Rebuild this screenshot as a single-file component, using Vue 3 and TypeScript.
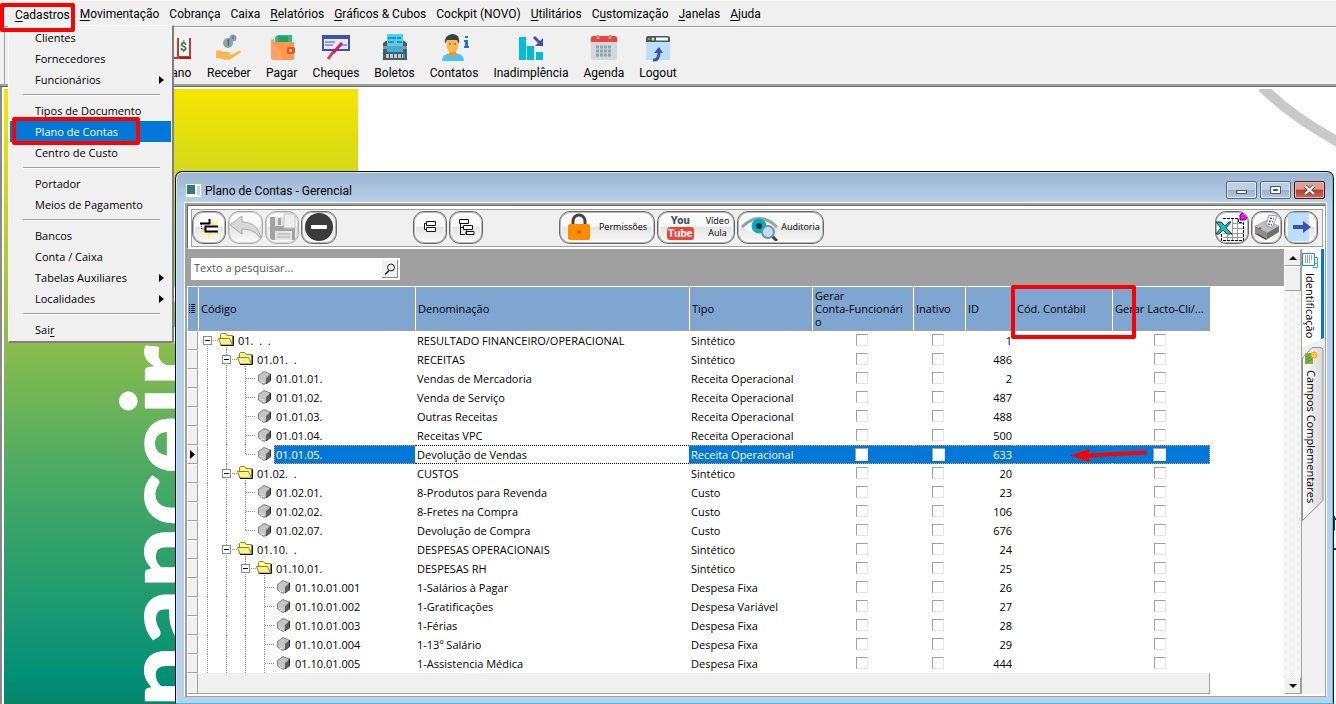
<script setup lang="ts">
import { ref } from 'vue'

interface MenuEntry { pre: string; key: string; post: string }
interface DropEntry { label: string; sub?: boolean; key?: string }
interface Account {
  code: string
  depth: number
  folder?: boolean
  last?: boolean
  name: string
  type: string
  id: number
}

const menus: MenuEntry[] = [
  { pre: '', key: 'C', post: 'adastros' },
  { pre: '', key: 'M', post: 'ovimentação' },
  { pre: 'Cobrança', key: '', post: '' },
  { pre: 'Caixa', key: '', post: '' },
  { pre: '', key: 'R', post: 'elatórios' },
  { pre: '', key: 'G', post: 'ráficos & Cubos' },
  { pre: 'Cockpit (NOVO)', key: '', post: '' },
  { pre: '', key: 'U', post: 'tilitários' },
  { pre: 'C', key: 'u', post: 'stomização' },
  { pre: '', key: 'J', post: 'anelas' },
  { pre: '', key: 'A', post: 'juda' },
]

const groups: DropEntry[][] = [
  [{ label: 'Clientes' }, { label: 'Fornecedores' }, { label: 'Funcionários', sub: true }],
  [{ label: 'Tipos de Documento' }, { label: 'Plano de Contas' }, { label: 'Centro de Custo' }],
  [{ label: 'Portador' }, { label: 'Meios de Pagamento' }],
  [{ label: 'Bancos' }, { label: 'Conta / Caixa' }, { label: 'Tabelas Auxiliares', sub: true }, { label: 'Localidades', sub: true }],
  [{ label: 'Sai', key: 'r' }],
]
const activeEntry = 'Plano de Contas'

const tools = ['Plano', 'Receber', 'Pagar', 'Cheques', 'Boletos', 'Contatos', 'Inadimplência', 'Agenda', 'Logout']

const columns = ['Código', 'Denominação', 'Tipo', 'Gerar\nConta-Funcionári\no', 'Inativo', 'ID', 'Cód. Contábil', 'Gerar Lacto-Cli/...']

const accounts: Account[] = [
  { code: '01.  .  .', depth: 0, folder: true, name: 'RESULTADO FINANCEIRO/OPERACIONAL', type: 'Sintético', id: 1 },
  { code: '01.01.  .', depth: 1, folder: true, name: 'RECEITAS', type: 'Sintético', id: 486 },
  { code: '01.01.01.', depth: 2, name: 'Vendas de Mercadoria', type: 'Receita Operacional', id: 2 },
  { code: '01.01.02.', depth: 2, name: 'Venda de Serviço', type: 'Receita Operacional', id: 487 },
  { code: '01.01.03.', depth: 2, name: 'Outras Receitas', type: 'Receita Operacional', id: 488 },
  { code: '01.01.04.', depth: 2, name: 'Receitas VPC', type: 'Receita Operacional', id: 500 },
  { code: '01.01.05.', depth: 2, last: true, name: 'Devolução de Vendas', type: 'Receita Operacional', id: 633 },
  { code: '01.02.  .', depth: 1, folder: true, name: 'CUSTOS', type: 'Sintético', id: 20 },
  { code: '01.02.01.', depth: 2, name: '8-Produtos para Revenda', type: 'Custo', id: 23 },
  { code: '01.02.02.', depth: 2, name: '8-Fretes na Compra', type: 'Custo', id: 106 },
  { code: '01.02.07.', depth: 2, last: true, name: 'Devolução de Compra', type: 'Custo', id: 676 },
  { code: '01.10.  .', depth: 1, folder: true, name: 'DESPESAS OPERACIONAIS', type: 'Sintético', id: 24 },
  { code: '01.10.01.', depth: 2, folder: true, name: 'DESPESAS RH', type: 'Sintético', id: 25 },
  { code: '01.10.01.001', depth: 3, name: '1-Salários à Pagar', type: 'Despesa Fixa', id: 26 },
  { code: '01.10.01.002', depth: 3, name: '1-Gratificações', type: 'Despesa Variável', id: 27 },
  { code: '01.10.01.003', depth: 3, name: '1-Férias', type: 'Despesa Fixa', id: 28 },
  { code: '01.10.01.004', depth: 3, name: '1-13º Salário', type: 'Despesa Fixa', id: 29 },
  { code: '01.10.01.005', depth: 3, name: '1-Assistencia Médica', type: 'Despesa Fixa', id: 444 },
]
const selectedId = ref(633)
const search = ref('')

const STEP = 19
const guideX = (level: number): number => 9 + STEP * level

function guides(a: Account): string {
  let d = ''
  for (let k = 0; k < a.depth; k++) d += `M${guideX(k)}.5 0V19`
  const x = guideX(a.depth)
  if (a.folder) {
    if (a.depth > 0) d += `M${x}.5 0V5`
    d += `M${x}.5 15V19M${x + 6} 9.5H${x + 11}M${x + STEP}.5 16V19`
  } else {
    d += a.last ? `M${x}.5 0V10` : `M${x}.5 0V19`
    d += `M${x + 1} 9.5H${x + 10}`
  }
  return d
}
</script>

<template>
  <div class="app">
    <nav class="menubar">
      <button v-for="(m, i) in menus" :key="i" type="button" :class="{ pressed: i === 0 }">{{ m.pre }}<u v-if="m.key">{{ m.key }}</u>{{ m.post }}</button>
    </nav>

    <div class="toolbar">
      <button v-for="t in tools" :key="t" type="button" class="tool">
        <svg width="32" height="28" viewBox="0 0 32 28" aria-hidden="true">
          <g v-if="t === 'Plano'">
            <path d="M5 4h26v21H5z" fill="#c33a3a" /><path d="M7 2h10v21H7zM19 3h10v19H19z" fill="#f4f4ee" /><path d="M5 25h14l2-2h10v2" fill="#922" />
            <text x="20" y="17" font-size="12" font-weight="700" fill="#2c7d4f">$</text>
          </g>
          <g v-else-if="t === 'Receber'">
            <circle cx="20" cy="4" r="3.500" fill="#8b9fb0" /><circle cx="15" cy="9" r="5" fill="#90a4ae" />
            <path d="M14 7l1.500-1v6" fill="none" stroke="#546e7a" stroke-width="1.500" /><path d="M20 2v3" stroke="#546e7a" />
            <path d="M3 17c3-2 6 0 8 1h5c2 0 2 3-1 3h3l7-4c3-1 4 1 2 2l-9 6c-4 2-7 0-15-1z" fill="#ffb74d" />
          </g>
          <g v-else-if="t === 'Pagar'">
            <path d="M4 5l3-4h20l3 5v18l-3 3H6l-2-4z" fill="#d5f1f4" />
            <path d="M9 3l3-2h14v9H9z" fill="#2ebd84" /><path d="M12 2h10v6H12z" fill="#249e6c" />
            <path d="M5 7c0-1 1-2 3-2v3h20v16c0 2-1 2-2 2H8c-2 0-3-1-3-3z" fill="#ff9750" /><path d="M5 8l11 9v9H8c-2 0-3-1-3-3z" fill="#ffac71" opacity=".5" />
            <rect x="21" y="13" width="8" height="7" rx="2" fill="#d95c31" /><circle cx="24.500" cy="16.500" r="1.500" fill="#ffc38b" />
          </g>
          <g v-else-if="t === 'Cheques'">
            <rect x="3" y="2" width="26" height="14" fill="#e8eaf6" stroke="#3f51b5" stroke-width="2" /><path d="M2 1h28v4H2z" fill="#3f51b5" />
            <path d="M5 8h10M5 11h8M19 11h8" stroke="#7986cb" stroke-width="1.500" />
            <path d="M22 9l-9 10" stroke="#d81b60" stroke-width="3" /><path d="M13 18l-5 7" stroke="#e53960" stroke-width="3" />
          </g>
          <g v-else-if="t === 'Boletos'">
            <path d="M4 9l3-2h18l3 2v17H4z" fill="#4c5a68" /><path d="M8 0h16v12H8z" fill="#4dd0f5" /><path d="M9 4h8M9 8h6M18 4h4M18 8h5" stroke="#1e7fa8" stroke-width="1.500" />
            <path d="M4 12h24v3H4z" fill="#8696a4" /><path d="M8 14h16v4H8z" fill="#33b5dc" /><path d="M7 22h17" stroke="#bdc8cf" stroke-width="4" stroke-dasharray="3 1" /><path d="M24 20h2v4h-2z" fill="#27ae60" />
          </g>
          <g v-else-if="t === 'Contatos'">
            <path d="M4 27c0-6 5-8 11-8s11 2 11 8z" fill="#4fc3f7" /><path d="M11 16h7v4c-1 3-6 3-7 0z" fill="#ff9800" />
            <path d="M9 6h11v7c0 7-11 7-11 0z" fill="#ffb74d" /><path d="M7 10c-1-7 3-9 7-10 6 0 8 4 7 10l-2-4H9z" fill="#37424a" /><path d="M11 10h2M16 10h2" stroke="#5d4037" />
            <path d="M27 2h3v2h-3zM26 6h4v6h1v2h-5v-2h1V8h-1z" fill="#1976d2" />
          </g>
          <g v-else-if="t === 'Inadimplência'">
            <path d="M4 3h7v23H4zM12 12h7v14h-7zM21 18h7v8h-7z" fill="#00bcd4" />
            <path d="M19 3l7 7" stroke="#3f51b5" stroke-width="3" /><path d="M28 4v8h-8z" fill="#3f51b5" />
          </g>
          <g v-else-if="t === 'Agenda'">
            <path d="M3 6h26v18q0 2-2 2H5q-2 0-2-2z" fill="#cfd8dc" /><path d="M3 8V4q0-2 2-2h22q2 0 2 2v4z" fill="#f44336" />
            <path d="M10 1v4M22 1v4" stroke="#90a4ae" stroke-width="3" /><path d="M8 13h16M8 17h16M8 21h16" stroke="#90a4ae" stroke-width="3" stroke-dasharray="3 1" />
          </g>
          <g v-else>
            <path d="M4 8h24v18H4z" fill="#bbdefb" /><path d="M4 8V4q0-2 2-2h20q2 0 2 2v4z" fill="#455a64" />
            <path d="M14 5h12" stroke="#fff" stroke-width="3" /><circle cx="7" cy="5" r="1" fill="#8bc34a" /><circle cx="11" cy="5" r="1.500" fill="#ffe03b" />
            <path d="M11 26q6 1 6-8" fill="none" stroke="#3f51b5" stroke-width="3" /><path d="M12 19l5-6 4 6z" fill="#3f51b5" />
          </g>
        </svg>
        <span>{{ t }}</span>
      </button>
    </div>

    <main class="workspace">
      <div class="banner"><span class="brand">nanceiro</span></div>
      <svg class="swoosh" width="80" height="64" viewBox="0 0 80 64" aria-hidden="true"><path d="M6-2Q36 28 84 54" fill="none" stroke="#c9c9c9" stroke-width="10" /></svg>
      <svg class="sliver" width="3" height="40" viewBox="0 0 3 40" aria-hidden="true"><path d="M1 3v14M0 6h3M0 36h3" fill="none" stroke="#123a52" stroke-width="2" /></svg>

      <section class="window" aria-label="Plano de Contas - Gerencial">
        <header class="titlebar">
          <svg width="15" height="13" viewBox="0 0 15 13" aria-hidden="true"><path d="M0 0h15v13H0z" fill="#fff" /><path d="M1 1h8v9H1z" fill="#2f7d6b" /><path d="M1 1h8v3H1z" fill="#3c6f8e" /><path d="M11 2h3v9h-3z" fill="#c9d6cf" /></svg>
          <h1>Plano de Contas - Gerencial</h1>
          <button type="button" class="sys" aria-label="Minimizar"><svg width="13" height="10" viewBox="0 0 13 10"><rect x="1.500" y="5.500" width="10" height="3" fill="#fff" stroke="#4a5766" /></svg></button>
          <button type="button" class="sys" aria-label="Restaurar"><svg width="13" height="10" viewBox="0 0 13 10"><path d="M1.500 1.500h10v7h-10zM4.500 4.500v1h4v-1z" fill="#fff" fill-rule="evenodd" stroke="#4a5766" /></svg></button>
          <button type="button" class="sys close" aria-label="Fechar"><svg width="13" height="10" viewBox="0 0 13 10"><path d="M2 1l9 8M11 1L2 9" stroke="#555" stroke-width="4" /><path d="M2 1l9 8M11 1L2 9" stroke="#fff" stroke-width="2" /></svg></button>
        </header>

        <div class="client">
          <div class="commands">
            <div class="bar">
              <button type="button" class="cmd w34" aria-label="Novo"><svg width="26" height="26" viewBox="0 0 26 26"><path d="M5 19l3-2M21 8l-2 3M12 18l1 4 2-4M20 18l2 3M17 11l-2-4" fill="none" stroke="#fff04a" stroke-width="2" /><path d="M5 6h8v3H5zM10 13h12v4H10z" fill="#fff" /><path d="M4 9.500h9.500V5M22 12.500H9.500v5H22" fill="none" stroke="#000" stroke-width="2" /><path d="M5.500 10v5H9" fill="none" stroke="#000" stroke-dasharray="1 1" /></svg></button>
              <button type="button" class="cmd w35 off" aria-label="Desfazer"><svg width="34" height="28" viewBox="0 0 34 28"><path d="M1 12L13 3v6c11 0 17 6 19 17-5-7-10-10-19-10v5z" fill="#d8d8d8" stroke="#a8a8a8" /></svg></button>
              <button type="button" class="cmd w34 off" aria-label="Salvar"><svg width="28" height="28" viewBox="0 0 28 28"><path d="M2 4h25v23H4l-2-2z" fill="#a3a3a3" /><path d="M7 4h10v9H7zM7 18h17v9H7z" fill="#e4e4e4" /><path d="M9 21h13M9 24h13" stroke="#aaa" /><path d="M10 5h3v7h-3z" fill="#a3a3a3" /><path d="M16 1h11v14H16z" fill="#eee" stroke="#c4c4c4" /></svg></button>
              <button type="button" class="cmd w36" aria-label="Excluir"><svg width="30" height="30" viewBox="0 0 30 30"><circle cx="15" cy="15" r="14" fill="#3b3b3b" /><rect x="7" y="13" width="16" height="4" rx="1" fill="#fff" /></svg></button>
              <button type="button" class="cmd w34 apart" aria-label="Expandir"><svg width="14" height="14" viewBox="0 0 14 14"><path d="M3.500 1.500h9v4h-9zM3.500 7.500h9v4h-9zM3 3.500H1.500v6H3" fill="#fff" stroke="#111" /></svg></button>
              <button type="button" class="cmd w34" aria-label="Hierarquia"><svg width="18" height="18" viewBox="0 0 18 18"><path d="M2.500 1.500h9v4h-9zM6.500 7.500h9v4h-9zM3.500 6v11M4 9.500h3M4 16.500h4M9.500 12v5M9 13.500h8v3H9z" fill="#fff" stroke="#111" /></svg></button>
              <button type="button" class="cmd w96 apart">
                <svg width="24" height="28" viewBox="0 0 24 28" aria-hidden="true"><path d="M6 12V8a6 6 0 0 1 12 0v4" fill="none" stroke="#424242" stroke-width="3" /><rect x="1" y="11" width="22" height="16" rx="2" fill="#fb8c00" /><circle cx="12" cy="19" r="2" fill="#c76a00" /></svg>
                <span>Permissões</span>
              </button>
              <button type="button" class="cmd w78">
                <span class="yt" aria-hidden="true"><b>You</b><i>Tube</i></span>
                <span>Vídeo<br>Aula</span>
              </button>
              <button type="button" class="cmd w87">
                <svg width="38" height="28" viewBox="0 0 38 28" aria-hidden="true"><path d="M2 14Q18-2 35 14Q18 27 2 14" fill="#fff" /><path d="M1 14Q18-3 36 14" fill="none" stroke="#90a4ae" stroke-width="3" /><circle cx="18" cy="13" r="7.500" fill="#00acc1" /><circle cx="18" cy="13" r="3" fill="#17343c" /><path d="M31 23l5 5" stroke="#37474f" stroke-width="3" /><circle cx="27" cy="19" r="6" fill="#bbdefb" stroke="#78909c" stroke-width="2" /></svg>
                <span>Auditoria</span>
              </button>
              <button type="button" class="cmd w34 end" aria-label="Exportar para Excel"><svg width="34" height="32" viewBox="0 0 34 32"><path d="M8 7h15l6 6v16H7V16" fill="#fff" /><path d="M8 7.500h15.500v4h5v18H6.500v-7" fill="none" stroke="#000" stroke-dasharray="3 1" /><path d="M17 12.500h11M17 17.500h11M8 22.500h20M8 26.500h20M12.500 24v5M17.500 8v21M22.500 8v21" stroke="#9a9a9a" /><path d="M1 11h5l4 4 4-4h2l-5 6 6 6h-5l-4-4-4 4H1l5-6z" fill="#17c3c3" stroke="#053b3b" /><path d="M25 4l2-2h5v5l-2 2h-5z" fill="#f0f" stroke="#600060" /></svg></button>
              <button type="button" class="cmd w31" aria-label="Imprimir"><svg width="28" height="28" viewBox="0 0 28 28"><path d="M2 13l12-6 12 6v6l-13 8-11-6z" fill="#6e6e6e" /><path d="M2 13l12-6 12 6-12 7z" fill="#bdbdbd" /><path d="M2 14l12 6v6L2 20z" fill="#8e8e8e" /><path d="M13 12l3-10 8 1-5 12z" fill="#fff" stroke="#99a" /><path d="M17 5l4 1M16 8l4 1M15 11l4 1" stroke="#4455e0" stroke-width="1.500" stroke-dasharray="2 1" /><path d="M6 15l2 1" stroke="#e33" stroke-width="2" /><path d="M4 21l9 5" stroke="#333" /></svg></button>
              <button type="button" class="cmd w34" aria-label="Sair"><svg width="28" height="28" viewBox="0 0 28 28"><path d="M1 0h21v28H1z" fill="#bbdefb" /><path d="M6 14h12" stroke="#3f51b5" stroke-width="4" /><path d="M16 8l8 6-8 6z" fill="#3f51b5" /></svg></button>
            </div>
          </div>

          <div class="content">
            <div class="grid-side">
              <div class="searchrow">
                <form class="search" @submit.prevent>
                  <input v-model="search" type="text" aria-label="Texto a pesquisar" placeholder="Texto a pesquisar...">
                  <button type="submit" aria-label="Pesquisar"><svg width="12" height="12" viewBox="0 0 12 12"><circle cx="7" cy="4.500" r="3.500" fill="none" stroke="#222" /><path d="M5 7.500L1 11.500" stroke="#222" stroke-width="1.500" /></svg></button>
                </form>
              </div>
              <table>
                <colgroup><col class="c0"><col class="c1"><col class="c2"><col class="c3"><col class="c4"><col class="c5"><col class="c6"><col class="c7"><col class="c7"></colgroup>
                <thead>
                  <tr>
                    <th class="mark"><svg width="8" height="10" viewBox="0 0 8 10" aria-hidden="true"><path d="M1 .5h1M1 2.500h1M1 4.500h1M1 6.500h1M1 8.500h1M3 .5h4M3 2.500h4M3 4.500h4M3 6.500h4M3 8.500h4" stroke="#111" /></svg></th>
                    <th v-for="c in columns" :key="c" scope="col">{{ c }}</th>
                  </tr>
                </thead>
                <tbody>
                  <tr v-for="a in accounts" :key="a.id" :class="{ selected: a.id === selectedId }" @click="selectedId = a.id">
                    <td class="rowhead"><svg v-if="a.id === selectedId" width="5" height="9" viewBox="0 0 5 9" aria-hidden="true"><path d="M0 0l5 4.500L0 9z" /></svg></td>
                    <td class="code">
                      <div class="node">
                        <svg :width="38 + STEP * a.depth" height="19" aria-hidden="true">
                          <path :d="guides(a)" class="guide" />
                          <g v-if="a.folder" :transform="`translate(${STEP * a.depth} 0)`">
                            <rect x="5.500" y="5.500" width="8" height="8" fill="#fff" stroke="#8a8a8a" /><path d="M7 9.500h5" stroke="#000" />
                            <path d="M22.500 13.500v-10l1-1h4l1.500 2h5.500v9z" fill="#ffffa8" stroke="#8c8c00" /><path d="M20.500 7.500h11l3 6.500H23z" fill="#ffef9a" stroke="#8c8c00" /><path d="M23 14.500h12.500V5" fill="none" stroke="#111" />
                          </g>
                          <g v-else :transform="`translate(${STEP * a.depth} 0)`">
                            <path d="M22.500 6.500L28 2.500l6 2.500v6l-6 4.500-5.500-3.500z" fill="#c4c4c4" stroke="#808080" /><path d="M34 5.500V11l-4 4V9z" fill="#606060" /><path d="M34.500 5v6.500L30 15" fill="none" stroke="#222" /><path d="M24 11.500h4M25 13.500h4" stroke="#fff" stroke-dasharray="1 1" />
                          </g>
                        </svg>
                        <span>{{ a.code }}</span>
                      </div>
                    </td>
                    <td class="name">{{ a.name }}</td>
                    <td>{{ a.type }}</td>
                    <td class="check"><input type="checkbox" :aria-label="`Gerar Conta-Funcionário ${a.code}`"></td>
                    <td class="check"><input type="checkbox" :aria-label="`Inativo ${a.code}`"></td>
                    <td class="num">{{ a.id }}</td>
                    <td></td>
                    <td class="check final"><input type="checkbox" :aria-label="`Gerar Lacto ${a.code}`"></td>
                  </tr>
                </tbody>
                <tfoot><tr><td class="rowhead"></td><td colspan="8"></td></tr></tfoot>
              </table>
            </div>

            <div class="scroll">
              <button type="button" aria-label="Rolar para cima"><svg width="8" height="4" viewBox="0 0 8 4"><path d="M0 4l4-4 4 4z" /></svg></button>
              <div class="thumb"></div>
              <div class="track"></div>
              <button type="button" aria-label="Rolar para baixo"><svg width="8" height="4" viewBox="0 0 8 4"><path d="M0 0h8L4 4z" /></svg></button>
            </div>

            <div class="tabs" role="tablist">
              <button type="button" role="tab" aria-selected="true" class="tab first">
                <svg width="17" height="17" viewBox="0 0 17 17" aria-hidden="true"><path d="M11.500 5.500h5v10h-5M13 11.500h3" fill="#e3f1fd" stroke="#42a5f5" /><path d="M1.500 1.500h12v12h-12z" fill="#fff" stroke="#1e88e5" /><path d="M4.500 3v8M6.500 3v8M8.500 3v8M10.500 3v5" stroke="#90a9d8" /></svg>
                <span>Identificação</span>
              </button>
              <button type="button" role="tab" aria-selected="false" class="tab second">
                <svg class="shape" width="22" height="174" viewBox="0 0 22 174" preserveAspectRatio="none" aria-hidden="true">
                  <defs><linearGradient id="tabFill" x1="0" x2="1" y1="0" y2="0"><stop offset="0" stop-color="#fff" /><stop offset="1" stop-color="#d8d8d8" /></linearGradient></defs>
                  <path d="M.5 11L10 .5h8q3 0 3 3v150L.5 173.500z" fill="url(#tabFill)" stroke="#8f8f8f" />
                </svg>
                <svg width="14" height="14" viewBox="0 0 14 14" aria-hidden="true"><path d="M1 2h8v11H1z" fill="#7cb342" /><path d="M2 6l5-3M2 9l6-4M2 12l6-4" stroke="#558b2f" /><circle cx="10" cy="4" r="3" fill="#ffc93c" stroke="#f9a01b" /></svg>
                <span>Campos Complementares</span>
              </button>
            </div>
          </div>
        </div>
      </section>
    </main>

    <div class="dropdown" role="menu">
      <div v-for="(g, gi) in groups" :key="gi" class="group">
        <button v-for="e in g" :key="e.label" type="button" role="menuitem" :class="{ active: e.label === activeEntry }">
          <span>{{ e.label }}<u v-if="e.key">{{ e.key }}</u></span>
          <svg v-if="e.sub" width="5" height="8" viewBox="0 0 5 8" aria-hidden="true"><path d="M0 0l5 4-5 4z" /></svg>
        </button>
      </div>
    </div>

    <div class="callout on-menu"></div>
    <div class="callout on-entry"></div>
    <div class="callout on-column"></div>
    <svg class="arrow" width="80" height="16" viewBox="0 0 80 16" aria-hidden="true"><path d="M20 8.500L76 5.500" stroke="#f00" stroke-width="4" stroke-linecap="round" /><path d="M1 8.500L21 2l-2 6 2 7z" fill="#f00" /></svg>
  </div>
</template>

<style>
body { margin: 0; background: #fff; }
</style>

<style scoped>
.app { position: relative; display: flex; flex-direction: column; min-height: 100vh; overflow: hidden; background: #fff; color: #000; font: 11px/14px "Open Sans", "Noto Sans", sans-serif; }
* { box-sizing: border-box; }
button { margin: 0; padding: 0; border: 0; background: none; color: inherit; font: inherit; }
svg { display: block; flex: none; }
u { text-underline-offset: 2px; }

.menubar { display: flex; align-items: center; gap: 10px; height: 28px; padding-left: 15px; background: #f0f0f0; border-top: 1px solid #fafafa; border-bottom: 1px solid #fff; box-shadow: inset 0 -1px #a0a0a0; font: 12px/16px Roboto, sans-serif; white-space: nowrap; }
.menubar .pressed { padding-top: 2px; }
.toolbar { display: flex; align-items: flex-start; gap: 15px; height: 59px; padding: 6px 0 0 160px; background: #f0f0f0; border-bottom: 1px solid #696969; box-shadow: inset 0 -2px #a0a0a0, inset 4px 0 #f0f0f0, inset 5px 0 #a0a0a0; font: 12px/16px Roboto, sans-serif; }
.tool { display: flex; flex-direction: column; align-items: center; gap: 3px; }

.workspace { position: relative; flex: 1; overflow: hidden; padding: 2px 0 0 2px; border-left: 2px solid #8a8a8a; display: flex; }
.banner { position: relative; width: 354px; overflow: hidden; background: linear-gradient(#f6e500 0%, #d2d91a 14%, #8bbd4c 41%, #4caa64 62%, #1d9a70 84%, #008f75 96%, #078569 100%); }
.brand { position: absolute; top: 194px; left: 89px; writing-mode: vertical-rl; rotate: 180deg; color: #fff; font: 900 110px/132px Lato, sans-serif; }
.swoosh { position: absolute; top: 2px; right: 0; }
.sliver { position: absolute; top: 426px; right: 0; }

.window { position: absolute; top: 84px; left: 173px; right: 2px; bottom: 0; display: flex; flex-direction: column; padding: 1px 6px 6px 8px; border: 1px solid #111; border-bottom: 1px solid #35c3e8; border-radius: 7px 7px 0 0; background: linear-gradient(#9ab4d2, #b9d1ea 31px); box-shadow: inset 1px 1px #d5e4f4, inset -1px 0 #3fc6ea; }
.titlebar { display: flex; align-items: center; gap: 3px; height: 29px; padding: 6px 2px 0 2px; }
.titlebar h1 { flex: 1; margin: 0 0 0 1px; font: 12px/16px Roboto, sans-serif; }
.sys { display: grid; place-items: center; width: 31px; height: 18px; margin-bottom: 2px; border: 1px solid #54657a; border-radius: 2px; background: linear-gradient(#bccfe3 50%, #98b1cc 50%, #b3c9e0); box-shadow: inset 0 0 0 1px #dbe7f3; }
.close { border-color: #4a1512; background: linear-gradient(#dc9d92 45%, #b93d27 50%, #cf6b57); box-shadow: inset 0 0 0 1px #e6b5ac; }

.client { flex: 1; display: flex; flex-direction: column; min-height: 0; border: 1px solid #fff; border-bottom-color: #a0a0a0; box-shadow: inset 2px 2px #a0a0a0, inset -1px 0 #a0a0a0; background: #fff; padding: 2px 1px 2px 2px; }
.commands { padding: 3px 2px 1px 3px; border-top: 1px solid #696969; border-left: 1px solid #696969; border-bottom: 1px solid #fff; background: #fff; }
.bar { display: flex; align-items: center; gap: 2px; height: 38px; padding: 0 4px 2px 0; border: 1px solid #a0a0a0; background: #f0f0f0; }
.cmd { display: flex; align-items: center; justify-content: center; gap: 8px; height: 33px; overflow: hidden; border: 1px solid #6a6a6a; border-radius: 11px; background: linear-gradient(#fafafa 45%, #e4e4e4 50%, #fafafa); box-shadow: inset 0 0 0 1px #b4b4b4, inset 0 0 0 2px #fff; font: 9px/12px "Open Sans", sans-serif; }
.off { border-color: #a9a9a9; box-shadow: inset 0 0 0 1px #d4d4d4; }
.w31 { width: 31px; } .w34 { width: 34px; } .w35 { width: 35px; } .w36 { width: 36px; } .w78 { width: 78px; } .w87 { width: 87px; } .w96 { width: 96px; }
.apart { margin-left: 74px; }
.end { margin-left: auto; }
.w87 { gap: 2px; }
.yt { display: flex; flex-direction: column; align-items: center; margin: 0 4px; font: 700 11px/13px Roboto, sans-serif; }
.yt b { color: #455a64; }
.yt i { width: 27px; border-radius: 3px; background: #f44336; color: #fff; font-style: normal; text-align: center; }

.content { flex: 1; display: flex; min-height: 0; }
.grid-side { flex: 1; min-width: 0; overflow: hidden; background: #fff; }
.searchrow { height: 37px; padding: 9px 0 0 4px; background: #a0a0a0; }
.search { display: flex; width: 209px; height: 22px; padding: 1px; border: 1px solid #fff; background: #fff; }
.search input { flex: 1; min-width: 0; padding: 0 1px 2px; border: 0; outline: 0; font: inherit; }
.search input::placeholder { color: #555; opacity: 1; }
.search button { display: grid; place-items: center; width: 16px; background: #f0f0f0; border-right: 1px solid #888; border-bottom: 1px solid #888; }

table { width: 1023px; border-collapse: separate; border-spacing: 0; table-layout: fixed; }
.c0 { width: 11px; } .c1 { width: 217px; } .c2 { width: 274px; } .c3 { width: 123px; } .c4 { width: 101px; } .c5 { width: 52px; } .c6 { width: 49px; } .c7 { width: 98px; }
th { height: 45px; padding: 0 0 0 2px; border: 1px solid #fff; border-right-color: #a0a0a0; border-bottom-color: #a0a0a0; background: #7fa5d1; font-weight: 400; line-height: 13px; text-align: left; white-space: pre; overflow: hidden; }
th.mark { padding: 0; }
td { height: 19px; padding: 0 2px; line-height: 17px; white-space: nowrap; overflow: hidden; }
td.rowhead { padding: 0 0 0 2px; border: 1px solid #fff; border-right-color: #a0a0a0; border-bottom-color: #a0a0a0; background: #f0f0f0; }
td.code { padding: 0; }
.node { display: flex; height: 19px; white-space: pre; }
.node span { flex: 1; padding-left: 2px; line-height: 19px; }
.guide { fill: none; stroke: #909090; stroke-dasharray: 1 1; }
td.check { padding: 0 3px 0 1px; }
.check input { appearance: none; display: block; width: 12px; height: 12px; margin: 0 auto 2px; border: 1px solid #e6e6e6; border-top-color: #a0a0a0; border-left-color: #a0a0a0; background: #fff; }
.num { text-align: right; }
.selected td { border-top: 1px dotted #f09a4a; border-bottom: 1px dotted #f09a4a; background: #0078d7; color: #fff; }
.selected td.rowhead { border: 1px solid #fff; border-right-color: #a0a0a0; border-bottom-color: #a0a0a0; background: #f0f0f0; }
.selected td.code { border: 0; background: #fff; }
.selected .node span { border: 1px dotted #f09a4a; border-right: 0; padding-left: 1px; line-height: 17px; background: #0078d7; }
.selected td.name { border-color: #000; background: #fff; color: #000; }
.selected td.final { border-right: 1px dotted #f09a4a; }
.selected .check input { width: 13px; height: 13px; margin-bottom: 0; }
tfoot td { height: 21px; border-right: 1px solid #a0a0a0; border-bottom: 1px solid #a0a0a0; background: #f0f0f0; }

.scroll { display: flex; flex-direction: column; width: 17px; background: #fff; }
.scroll button { display: grid; place-items: center; height: 17px; border: 1px solid #fff; border-right-color: #a0a0a0; border-bottom-color: #a0a0a0; background: #f0f0f0; }
.thumb { height: 25px; border: 1px solid #fff; border-right-color: #a0a0a0; border-bottom-color: #a0a0a0; background: #f0f0f0; }
.track { flex: 1; background: repeating-conic-gradient(#f0f0f0 0 25%, #fff 0 50%) 0 0 / 2px 2px; }
.tabs { width: 24px; border-left: 1px solid #a0a0a0; background: #f0f0f0; }
.tab { position: relative; display: flex; flex-direction: column; align-items: center; width: 22px; }
.tab span { position: relative; writing-mode: vertical-rl; line-height: 14px; }
.tab svg { position: relative; }
.first { gap: 4px; height: 98px; padding: 3px 4px 0 0; border-right: 3px solid #0078d7; background: #fff; clip-path: polygon(0 0, 100% 0, 100% 89px, 0 100%); }
.second { gap: 5px; height: 174px; padding: 4px 4px 0 0; }
.tab .shape { position: absolute; inset: 0; }

.dropdown { position: absolute; top: 25px; left: 8px; width: 166px; padding: 1px; border: 1px solid #fff; border-right: 2px solid #808080; border-bottom: 2px solid #808080; background: #f0f0f0; }
.group + .group { padding-top: 10px; background: linear-gradient(#a0a0a0, #a0a0a0) 13px 4px / 137px 1px no-repeat, linear-gradient(#fff, #fff) 13px 5px / 137px 1px no-repeat; }
.dropdown button { display: flex; align-items: center; justify-content: space-between; width: 100%; height: 21px; padding: 0 7px 0 25px; text-align: left; }
.dropdown .active { background: #0078d7; color: #fff; }

.callout { position: absolute; border: 4px solid #f00; border-radius: 2px; pointer-events: none; }
.on-menu { top: 3px; left: 0; width: 75px; height: 29px; }
.on-entry { top: 117px; left: 12px; width: 128px; height: 28px; }
.on-column { top: 285px; left: 1011px; width: 125px; height: 54px; }
.arrow { position: absolute; top: 447px; left: 1069px; }
</style>
